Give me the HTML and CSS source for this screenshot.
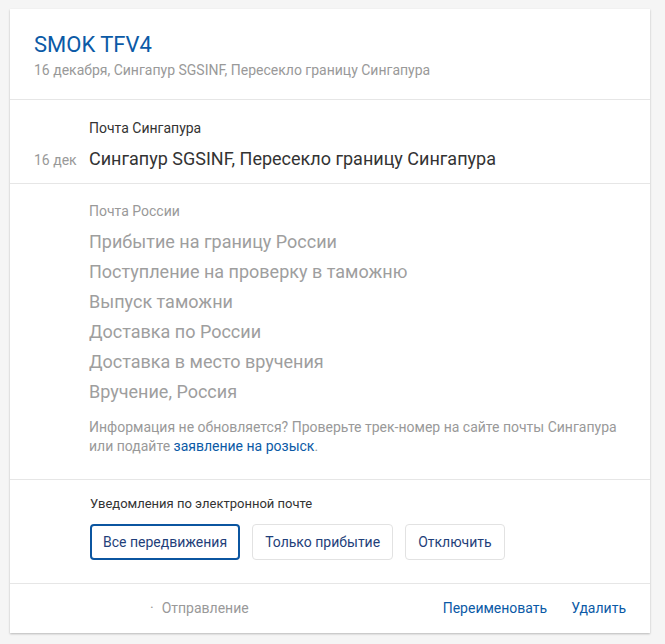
FILE: index.html
```html
<!DOCTYPE html>
<html lang="ru">
<head>
<meta charset="utf-8">
<title>SMOK TFV4</title>
<link rel="stylesheet" href="styles.css">
</head>
<body>
<div class="card">
  <header class="head">
    <h1 class="title">SMOK TFV4</h1>
    <div class="subtitle">16 декабря, Сингапур SGSINF, Пересекло границу Сингапура</div>
  </header>

  <section class="sec sec-sg">
    <div class="carrier carrier-dark">Почта Сингапура</div>
    <div class="event">
      <span class="date">16 дек</span>
      <span class="event-text">Сингапур SGSINF, Пересекло границу Сингапура</span>
    </div>
  </section>

  <section class="sec sec-ru">
    <div class="carrier">Почта России</div>
    <ul class="steps">
      <li>Прибытие на границу России</li>
      <li>Поступление на проверку в таможню</li>
      <li>Выпуск таможни</li>
      <li>Доставка по России</li>
      <li>Доставка в место вручения</li>
      <li>Вручение, Россия</li>
    </ul>
    <p class="info">Информация не обновляется? Проверьте трек-номер на сайте почты Сингапура<br>или подайте <a href="#" class="link">заявление на розыск</a>.</p>
  </section>

  <section class="sec sec-notify">
    <div class="notify-label">Уведомления по электронной почте</div>
    <div class="btns">
      <button class="btn btn-active">Все передвижения</button>
      <button class="btn">Только прибытие</button>
      <button class="btn">Отключить</button>
    </div>
  </section>

  <footer class="foot">
    <span class="kind"><span class="dot">·</span>Отправление</span>
    <span class="actions">
      <a href="#" class="action">Переименовать</a>
      <a href="#" class="action">Удалить</a>
    </span>
  </footer>
</div>
</body>
</html>
```

FILE: styles.css
```css
* { box-sizing: border-box; }
html, body { margin: 0; }
body {
  background: #f5f5f5;
  padding: 9px 10px;
  font-family: Roboto, "Liberation Sans", Arial, sans-serif;
  color: #222;
}
.card {
  width: 640px;
  background: #fff;
  box-shadow: 0 1px 2px rgba(0,0,0,0.25);
}
.head {
  padding: 23px 24px 20px;
  border-bottom: 1px solid #e6e6e6;
}
.title {
  margin: 0;
  font-size: 22px;
  line-height: 26px;
  font-weight: 400;
  color: #0b5aa6;
}
.subtitle {
  margin-top: 3px;
  font-size: 14px;
  line-height: 18px;
  color: #999;
}
.sec {
  padding-left: 79px;
  padding-right: 24px;
  border-bottom: 1px solid #e6e6e6;
}
.sec-sg { padding-top: 19px; padding-bottom: 12px; }
.carrier {
  font-size: 14px;
  line-height: 18px;
  color: #999;
}
.carrier-dark { color: #333; }
.event {
  display: flex;
  align-items: baseline;
  margin-top: 10px;
  margin-left: -55px;
}
.date {
  width: 55px;
  font-size: 14px;
  color: #999;
}
.event-text {
  font-size: 18px;
  line-height: 24px;
  color: #333;
}
.sec-ru { padding-top: 18px; padding-bottom: 23px; }
.steps {
  list-style: none;
  margin: 7px 0 0;
  padding: 0;
}
.steps li {
  font-size: 18px;
  line-height: 30px;
  color: #9e9e9e;
}
.info {
  margin: 11px 0 0;
  font-size: 14px;
  line-height: 19px;
  color: #999;
}
.link { color: #0b5aa6; text-decoration: none; }
.sec-notify { padding-top: 15px; padding-bottom: 23px; padding-left: 80px; }
.notify-label {
  font-size: 13px;
  line-height: 18px;
  color: #333;
}
.btns {
  display: flex;
  gap: 12px;
  margin-top: 11px;
}
.btn {
  height: 36px;
  padding: 0 12px;
  background: #fff;
  border: 1px solid #e2e2e2;
  border-radius: 4px;
  font-family: inherit;
  font-size: 14px;
  color: #1f3f7a;
}
.btn-active {
  border: 2px solid #0b55a0;
  padding: 0 11px;
}
.foot {
  display: flex;
  align-items: center;
  justify-content: space-between;
  padding: 15px 24px 16px 140px;
  font-size: 14px;
  line-height: 18px;
}
.kind { color: #999; }
.dot { margin-right: 8px; }
.actions { display: flex; gap: 24px; }
.action { color: #0b5aa6; text-decoration: none; }
```
